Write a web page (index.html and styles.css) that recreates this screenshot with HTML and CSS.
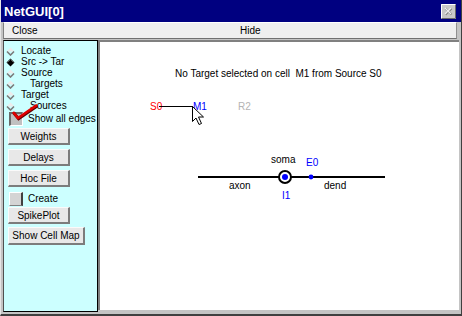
FILE: index.html
```html
<!DOCTYPE html>
<html lang="en">

<head>
    <meta charset="UTF-8">
    <title>NetGUI[0]</title>
    <link rel="stylesheet" href="styles.css">
</head>

<body>
    <div class="window">
        <div class="titlebar">
            <span class="title">NetGUI[0]</span>
            <span class="close-box">
                <svg width="15" height="15" viewBox="0 0 15 15">
                    <rect x="0" y="0" width="15" height="15" fill="#c8c8c8" />
                    <path d="M0.5 14.5 V0.5 H14.5" stroke="#ffffff" fill="none" />
                    <path d="M0.5 14.5 H14.5 V0.5" stroke="#6a6a6a" fill="none" />
                    <path d="M4.5 4.5 L10.5 10.5 M10.5 4.5 L4.5 10.5" stroke="#808080" stroke-width="2" />
                    <path d="M4 4 L10 10 M10 4 L4 10" stroke="#eeeeee" stroke-width="1.4" />
                </svg>
            </span>
        </div>

        <div class="menubar">
            <span class="menu-item">Close</span>
            <span class="menu-item">Hide</span>
        </div>

        <div class="main">
            <!-- left control panel -->
            <div class="panel">
                <div class="radio"><svg class="rb" viewBox="0 0 9 9"><path d="M0.5 4.5 L4.5 0.5 L8.5 4.5 Z" fill="#ececec" /><path d="M1 4.5 L4.5 8 L8 4.5" stroke="#7a7a7a" stroke-width="1.6" fill="none" /></svg>Locate</div>
                <div class="radio"><svg class="rb" viewBox="0 0 9 9"><path d="M4.5 0.5 L8.5 4.5 L4.5 8.5 L0.5 4.5 Z" fill="#000" /><path d="M1.5 4.5 L4.5 1.5 L7.5 4.5" stroke="#555" fill="none" /></svg>Src -&gt; Tar</div>
                <div class="radio"><svg class="rb" viewBox="0 0 9 9"><path d="M0.5 4.5 L4.5 0.5 L8.5 4.5 Z" fill="#ececec" /><path d="M1 4.5 L4.5 8 L8 4.5" stroke="#7a7a7a" stroke-width="1.6" fill="none" /></svg>Source</div>
                <div class="radio"><svg class="rb" viewBox="0 0 9 9"><path d="M0.5 4.5 L4.5 0.5 L8.5 4.5 Z" fill="#ececec" /><path d="M1 4.5 L4.5 8 L8 4.5" stroke="#7a7a7a" stroke-width="1.6" fill="none" /></svg><span class="indent">Targets</span></div>
                <div class="radio"><svg class="rb" viewBox="0 0 9 9"><path d="M0.5 4.5 L4.5 0.5 L8.5 4.5 Z" fill="#ececec" /><path d="M1 4.5 L4.5 8 L8 4.5" stroke="#7a7a7a" stroke-width="1.6" fill="none" /></svg>Target</div>
                <div class="radio"><svg class="rb" viewBox="0 0 9 9"><path d="M0.5 4.5 L4.5 0.5 L8.5 4.5 Z" fill="#ececec" /><path d="M1 4.5 L4.5 8 L8 4.5" stroke="#7a7a7a" stroke-width="1.6" fill="none" /></svg><span class="indent">Sources</span></div>

                <div class="check-row">
                    <span class="checkbox checked"></span>
                    <svg class="tick" width="26" height="18" viewBox="0 0 26 18">
                        <path d="M1 8 L6 14 L25 1" stroke="#600000" stroke-width="3" fill="none" transform="translate(0.6 0.8)" />
                        <path d="M1 8 L6 14 L25 1" stroke="#e00000" stroke-width="2.6" fill="none" />
                    </svg>
                    <span class="label">Show all edges</span>
                </div>

                <div class="btn btn-first">Weights</div>
                <div class="btn">Delays</div>
                <div class="btn">Hoc File</div>

                <div class="check-row create-row">
                    <span class="checkbox"></span>
                    <span class="label">Create</span>
                </div>

                <div class="btn btn-tight">SpikePlot</div>
                <div class="btn btn-wide">Show Cell Map</div>
            </div>

            <!-- drawing area -->
            <div class="canvas">
                <svg class="scene" width="359" height="268" viewBox="0 0 359 268">
                    <text x="75" y="35" class="msg">No Target selected on cell&#160; M1 from Source S0</text>

                    <text x="50" y="68" class="red">S0</text>
                    <line x1="59" y1="64.5" x2="93" y2="64.5" stroke="#000" />
                    <text x="93" y="68" class="blue">M1</text>
                    <text x="138" y="68" class="gray">R2</text>
                    <path d="M92.5 64.5 V79.5 L96 76 L99 82.5 L101.5 81.5 L98.5 75 L103.5 75 Z" fill="#fff" stroke="#000" />

                    <line x1="98" y1="135" x2="285" y2="135" stroke="#000" stroke-width="2" />
                    <text x="171" y="121" class="lbl">soma</text>
                    <text x="206" y="124" class="blue">E0</text>
                    <circle cx="185" cy="135" r="6" fill="#fff" stroke="#000" stroke-width="2" />
                    <circle cx="185" cy="135" r="3" fill="#0000ff" />
                    <circle cx="211" cy="135" r="2.4" fill="#0000ff" />
                    <text x="129" y="147" class="lbl">axon</text>
                    <text x="224" y="147" class="lbl">dend</text>
                    <text x="182" y="157" class="blue">I1</text>
                </svg>
            </div>
        </div>
    </div>
</body>

</html>
```

FILE: styles.css
```css
body {
    margin: 0;
    padding: 0;
    font-family: "Liberation Sans", Arial, sans-serif;
    font-size: 10px;
    color: #000;
}

.window {
    width: 462px;
    height: 316px;
    box-sizing: border-box;
    background: #c4c4c4;
    border-right: 1px solid #404040;
    border-bottom: 2px solid #404040;
    border-left: 1px solid #e6e6e6;
    overflow: hidden;
}

/* Title bar */
.titlebar {
    height: 22px;
    background: #000080;
    display: flex;
    align-items: center;
    padding-left: 4px;
    margin-left: -1px;
}

.title {
    color: #fff;
    font-weight: bold;
    font-size: 13px;
}

.close-box {
    margin-left: auto;
    margin-right: 5px;
    height: 15px;
}

/* Menu bar */
.menubar {
    height: 17px;
    box-sizing: border-box;
    margin: 0 4px 1px 2px;
    background: #efefef;
    border-top: 1px solid #ffffff;
    border-left: 1px solid #808080;
    border-bottom: 1px solid #707070;
    border-right: 1px solid #909090;
    display: flex;
    align-items: center;
    padding-left: 8px;
    font-size: 10px;
}

.menu-item:first-child {
    width: 228px;
}

/* Main area */
.main {
    display: flex;
    padding: 0 2px 0 2px;
    height: 272px;
}

.panel {
    width: 95px;
    height: 272px;
    box-sizing: border-box;
    background: #ccffff;
    border: 1px solid #000;
    border-left-color: #505050;
    padding: 4px 0 0 2px;
}

.radio {
    height: 11px;
    display: flex;
    align-items: center;
    gap: 6px;
    white-space: nowrap;
}

.rb {
    width: 9px;
    height: 9px;
    margin-top: 2px;
    flex: none;
}

.indent {
    padding-left: 9px;
}

.check-row {
    position: relative;
    height: 15px;
    display: flex;
    align-items: center;
    padding-left: 3px;
}

.checkbox {
    width: 14px;
    height: 14px;
    box-sizing: border-box;
    background: #d4d4d4;
    border-top: 1px solid #fff;
    border-left: 1px solid #fff;
    border-right: 2px solid #404040;
    border-bottom: 1px solid #808080;
    flex: none;
}

.checkbox.checked {
    background: #c0c0c0;
    border-top: 2px solid #6a6a6a;
    border-left: 2px solid #6a6a6a;
    border-right: 1px solid #fff;
    border-bottom: 1px solid #fff;
}

.tick {
    position: absolute;
    left: 6px;
    top: -7px;
}

.label {
    margin-left: 5px;
    white-space: nowrap;
}

.create-row {
    margin-top: 0;
    margin-bottom: 1px;
}

/* Push buttons */
.btn {
    width: 62px;
    height: 17px;
    box-sizing: border-box;
    margin: 0 0 4px 2px;
    background: #e8e8e8;
    border-top: 1px solid #fafafa;
    border-left: 1px solid #fafafa;
    border-right: 2px solid #7c7c7c;
    border-bottom: 2px solid #7c7c7c;
    display: flex;
    align-items: center;
    justify-content: center;
    white-space: nowrap;
}

.btn-first {
    margin-top: 2px;
}

.btn-tight {
    margin-bottom: 3px;
}

.btn-wide {
    width: 77px;
    height: 18px;
}

/* Drawing canvas */
.canvas {
    flex: 1;
    height: 270px;
    box-sizing: border-box;
    background: #fff;
    border-top: 2px solid #808080;
    border-left: 2px solid #808080;
}

.scene {
    display: block;
    font-family: "Liberation Sans", Arial, sans-serif;
    font-size: 10px;
}

.msg,
.lbl {
    fill: #000;
}

.red {
    fill: #ff0000;
}

.blue {
    fill: #0000ff;
}

.gray {
    fill: #b4b4b4;
}
```
